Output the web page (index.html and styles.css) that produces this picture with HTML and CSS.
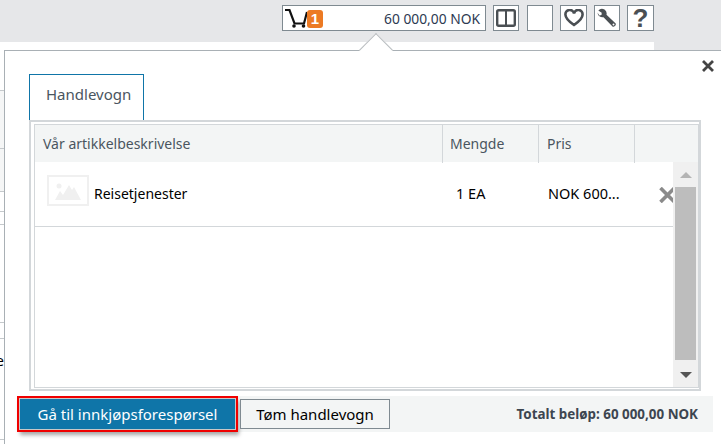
FILE: index.html
```html
<!DOCTYPE html>
<html lang="nb">
<head>
  <meta charset="UTF-8" />
  <title>Handlevogn</title>
  <link rel="stylesheet" href="styles.css">
</head>
<body>

  <header class="topbar">
    <div class="cart-box">
      <svg class="cart-icon" width="22" height="20" viewBox="0 0 22 20">
        <path d="M0 2h4.500L9.500 15.500H19L22 4" fill="none" stroke="#111" stroke-width="2.200"/>
        <circle cx="9" cy="18" r="1.800" fill="#111"/>
        <circle cx="18.500" cy="18" r="1.800" fill="#111"/>
      </svg>
      <span class="cart-badge">1</span>
      <span class="cart-sum">60 000,00 NOK</span>
    </div>
    <button type="button" class="tool">
      <svg width="20" height="18" viewBox="0 0 20 18"><rect x="1.200" y="1.200" width="17.600" height="15.600" rx="1.500" fill="none" stroke="#4a4f53" stroke-width="2.400"/><path d="M10 1v16" stroke="#4a4f53" stroke-width="2"/></svg>
    </button>
    <button type="button" class="tool tool-blank"></button>
    <button type="button" class="tool tool-wide">
      <svg width="20" height="18" viewBox="0 0 20 18"><path d="M10 16C5 12.500 1.500 9.500 1.500 6A4.300 4.300 0 0 1 10 4.500 4.300 4.300 0 0 1 18.500 6C18.500 9.500 15 12.500 10 16Z" fill="none" stroke="#4a4f53" stroke-width="2.600"/></svg>
    </button>
    <button type="button" class="tool">
      <svg width="20" height="20" viewBox="0 0 20 20"><path d="M7.500 1.500A5 5 0 0 0 1.300 2.600L4.700 4.800 4.500 7 2.300 7.400 0.500 4.500A5 5 0 0 0 6.500 9.200L15.500 18.500C16.500 19.500 19.500 17.500 18.700 15.500L9.500 6.700A5 5 0 0 0 7.500 1.500Z" fill="#4a4f53"/><circle cx="16.500" cy="16.500" r="1" fill="#fff"/></svg>
    </button>
    <button type="button" class="tool tool-wide tool-help">?</button>
  </header>

  <div class="subbar">
    <div class="subbar-fill"></div>
  </div>

  <div class="backdrop">
    <div class="back-row back-a"></div>
    <div class="back-row back-b"></div>
    <div class="back-row back-c"></div>
    <div class="back-row back-d"></div>
    <div class="back-row back-e"></div>
    <div class="back-row back-f"></div>
    <div class="back-row back-g"></div>
    <div class="back-row back-h"><span>e</span></div>
  </div>

  <section class="popover">
    <span class="caret"></span>
    <svg class="close" width="12" height="12" viewBox="0 0 12 12"><path d="M1 1 11 11M11 1 1 11" stroke="#444" stroke-width="2.800"/></svg>

    <div class="tabs">
      <div class="tab">Handlevogn</div>
    </div>

    <div class="frame">
      <div class="cart-table">
        <div class="thead">
          <div class="th th-desc">Vår artikkelbeskrivelse</div>
          <div class="th th-qty">Mengde</div>
          <div class="th th-price">Pris</div>
          <div class="th th-del"></div>
        </div>
        <div class="tbody">
          <div class="rows">
            <div class="row">
              <div class="cell-desc">
                <span class="thumb">
                  <svg width="26" height="19" viewBox="0 0 26 19"><circle cx="4" cy="5" r="2.500" fill="#f0f0f0"/><path d="M0 19 5 10 8 14 14 4 17 9 19 6 26 19Z" fill="#f0f0f0"/></svg>
                </span>
                <span>Reisetjenester</span>
              </div>
              <div class="cell-qty">1 EA</div>
              <div class="cell-price">NOK 600...</div>
              <div class="cell-del">
                <svg width="18" height="16" viewBox="0 0 18 16"><path d="M1.500 1 15.500 15M15.500 1 1.500 15" stroke="#8a8a8a" stroke-width="3.600"/></svg>
              </div>
            </div>
          </div>
          <div class="scrollbar">
            <span class="arrow-up"></span>
            <span class="thumb-bar"></span>
            <span class="arrow-down"></span>
          </div>
        </div>
      </div>
    </div>

    <footer class="actions">
      <button type="button" class="btn btn-primary">Gå til innkjøpsforespørsel</button>
      <button type="button" class="btn">Tøm handlevogn</button>
      <div class="total">Totalt beløp: 60 000,00 NOK</div>
    </footer>
  </section>

</body>
</html>
```

FILE: styles.css
```css
* {
  box-sizing: border-box;
}

html, body {
  margin: 0;
  height: 444px;
  overflow: hidden;
}

body {
  position: relative;
  background: #fff;
  font-family: "Noto Sans", "Liberation Sans", sans-serif;
  font-size: 14px;
  color: #000;
}

/* top bar */
.topbar {
  display: flex;
  align-items: flex-start;
  gap: 7px;
  height: 42px;
  padding: 5px 0 0 282px;
  background: #e6e7e9;
}

.cart-box {
  display: flex;
  flex: none;
  align-items: center;
  width: 204px;
  height: 26px;
  padding: 0 5px 0 2px;
  background: #fff;
  border: 1px solid #7f8a91;
}

.cart-icon {
  flex: none;
}

.cart-badge {
  flex: none;
  width: 16px;
  height: 18px;
  margin: 2px 0 0 0;
  background: #ec7a23;
  border-radius: 3px;
  color: #fff;
  font: bold 15px/18px "Liberation Sans", sans-serif;
  text-align: center;
}

.cart-sum {
  margin-left: auto;
  font-size: 13.800px;
  color: #2d3a52;
}

.tool {
  display: flex;
  flex: none;
  align-items: center;
  justify-content: center;
  width: 26px;
  height: 26px;
  padding: 0;
  background: #fff;
  border: 1px solid #7f8a91;
}

.tool-blank {
  margin-left: 1px;
}

.tool-wide {
  width: 27px;
}

.tool-help {
  font: bold 26px/24px "Liberation Sans", sans-serif;
  color: #4a4f53;
}

.subbar {
  display: flex;
  justify-content: flex-end;
  height: 8px;
}

.subbar-fill {
  width: 67px;
  background: #e6e7e9;
}

/* page behind the popover */
.backdrop {
  width: 4px;
  overflow: hidden;
}

.back-row {
  border-bottom: 1px solid #c5c9cc;
}

.back-a { height: 41px; }
.back-b { height: 58px; background: #f5f6f6; }
.back-c { height: 43px; background: #f5f6f6; }
.back-d { height: 20px; }
.back-e { height: 13px; }
.back-f { height: 98px; }
.back-g { height: 16px; }
.back-h { height: 89px; }

.back-h span {
  display: block;
  margin: 12px 0 0 -4px;
  white-space: nowrap;
}

/* popover */
.popover {
  position: absolute;
  top: 50px;
  left: 4px;
  right: 0;
  bottom: 0;
  padding: 23px 0 0 24px;
  background: #fff;
  border-top: 1px solid #a9b0b5;
  border-left: 1px solid #a9b0b5;
}

.caret {
  position: absolute;
  top: -13px;
  left: 359px;
  width: 24px;
  height: 24px;
  background: #fff;
  border-top: 1px solid #b9bdc0;
  border-left: 1px solid #b9bdc0;
  transform: rotate(45deg);
}

.close {
  position: absolute;
  top: 9px;
  right: 7px;
}

.tabs {
  display: flex;
}

.tab {
  width: 115px;
  height: 46px;
  padding-left: 16px;
  border: 1px solid #0f75a8;
  border-bottom: 0;
  font-size: 15px;
  line-height: 38px;
  color: #4a5560;
}

.frame {
  width: 672px;
  height: 271px;
  padding: 2px 0 1px 3px;
  border: 2px solid #d3d7da;
}

.cart-table {
  height: 100%;
  border: 1px solid #d3d7da;
}

.thead {
  display: grid;
  grid-template-columns: 408px 96px 96px 1fr;
  height: 37px;
  background: #f3f5f5;
}

.th {
  padding-left: 7px;
  line-height: 38px;
  color: #4a5560;
  border-right: 1px solid #d3d7da;
}

.th-desc,
.th-price {
  padding-left: 8px;
}

.th-del {
  border-right: 0;
}

.tbody {
  display: flex;
  height: 225px;
}

.rows {
  flex: 1;
  min-width: 0;
}

.row {
  display: grid;
  grid-template-columns: 408px 96px 96px 1fr;
  align-items: center;
  height: 65px;
  padding-bottom: 2px;
  border-bottom: 1px solid #d3d7da;
  overflow: hidden;
}

.cell-desc {
  display: flex;
  align-items: center;
  gap: 5px;
  padding-left: 12px;
}

.thumb {
  display: flex;
  align-items: center;
  justify-content: center;
  width: 42px;
  height: 31px;
  margin-bottom: 5px;
  border: 2px solid #f0f0f0;
}

.cell-qty {
  padding-left: 13px;
  font-size: 14.500px;
}

.cell-price {
  padding-left: 9px;
  font-size: 14.500px;
}

.cell-del {
  display: flex;
  margin-top: 4px;
  padding-left: 24px;
}

.cell-del svg {
  flex: none;
}

.scrollbar {
  display: flex;
  flex-direction: column;
  align-items: center;
  flex: none;
  width: 25px;
  padding-top: 10px;
  background: #f0f0f0;
}

.arrow-up {
  width: 0;
  height: 0;
  border: 6px solid transparent;
  border-top: 0;
  border-bottom: 6px solid #b4b4b4;
}

.thumb-bar {
  width: 21px;
  height: 173px;
  margin: 9px 0 12px;
  background: #bdbdbd;
}

.arrow-down {
  width: 0;
  height: 0;
  border: 6px solid transparent;
  border-bottom: 0;
  border-top: 6px solid #555;
}

/* footer */
.actions {
  display: flex;
  align-items: center;
  gap: 5px;
  width: 696px;
  height: 36px;
  margin: 5px 0 0 -12px;
  background: #f3f5f5;
}

.btn {
  width: 150px;
  height: 30px;
  padding: 0;
  background: #f3f5f5;
  border: 1px solid #7f8a91;
  font: inherit;
  font-size: 15px;
  color: #000;
}

.btn-primary {
  width: 215px;
  margin-left: 3px;
  background: #0f75a8;
  border: 0;
  outline: 2px solid #f00000;
  outline-offset: 1px;
  box-shadow: 0 0 0 1px #c8c8c8, 2px 4px 4px 2px rgba(0, 0, 0, .35);
  color: #fff;
}

.total {
  margin-left: auto;
  padding-right: 15px;
  font-size: 13.400px;
  font-weight: bold;
  color: #3d4650;
}
```
